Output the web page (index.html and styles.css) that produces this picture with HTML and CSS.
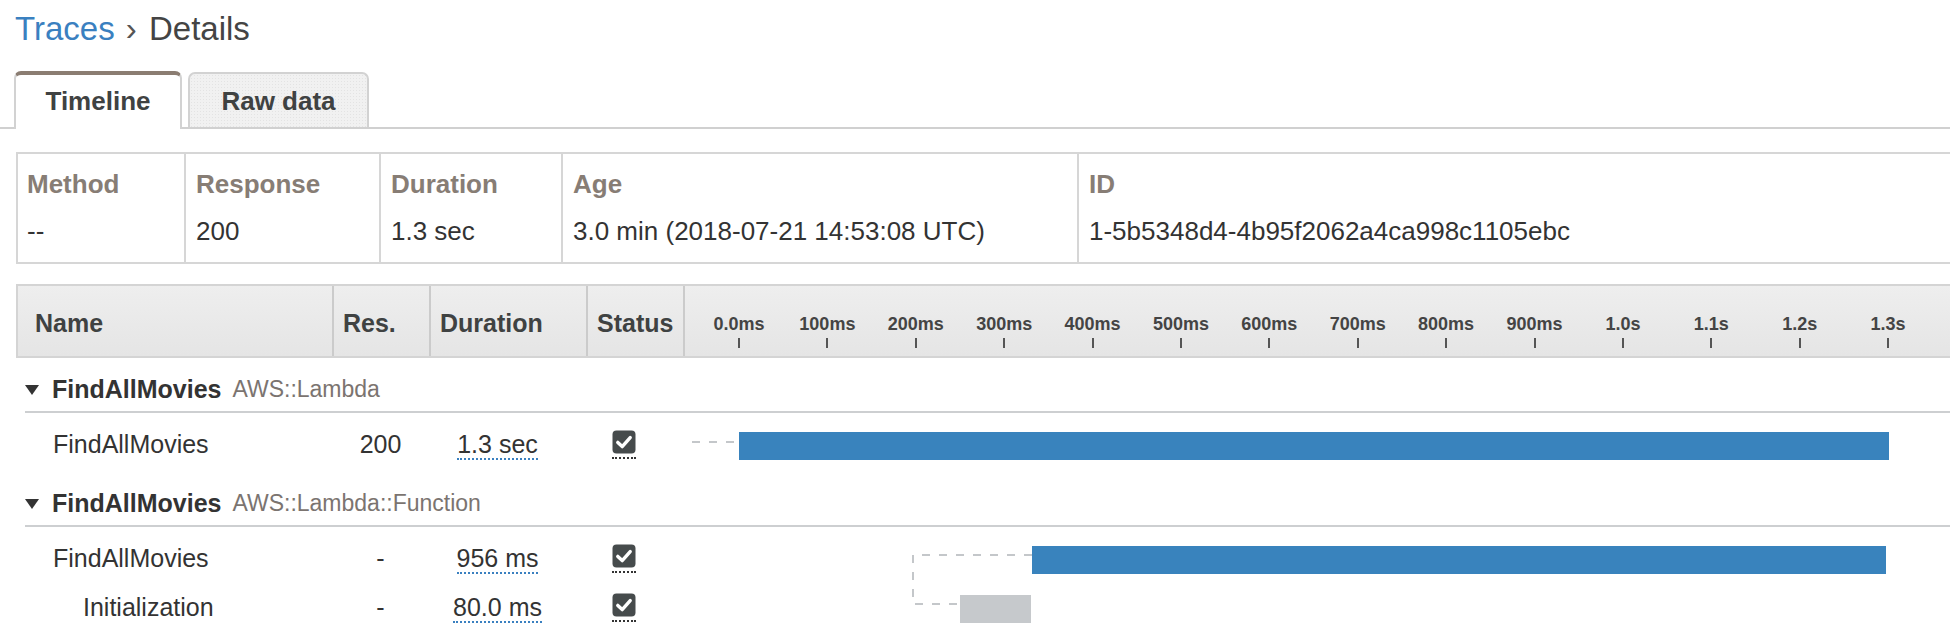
FILE: index.html
```html
<!DOCTYPE html>
<html>
<head>
<meta charset="utf-8">
<link rel="stylesheet" href="styles.css">
</head>
<body>
<div class="page">
  <h1 class="crumbs"><span class="crumb-link">Traces</span> <span class="sep">›</span> Details</h1>

  <div class="tabs">
    <div class="tab tab-active">Timeline</div>
    <div class="tab tab-raw">Raw data</div>
  </div>

  <div class="summary">
    <div class="sum-cell"><div class="sum-label">Method</div><div class="sum-value">--</div></div>
    <div class="sum-cell"><div class="sum-label">Response</div><div class="sum-value">200</div></div>
    <div class="sum-cell"><div class="sum-label">Duration</div><div class="sum-value">1.3 sec</div></div>
    <div class="sum-cell"><div class="sum-label">Age</div><div class="sum-value">3.0 min (2018-07-21 14:53:08 UTC)</div></div>
    <div class="sum-cell"><div class="sum-label">ID</div><div class="sum-value">1-5b5348d4-4b95f2062a4ca998c1105ebc</div></div>
  </div>

  <div class="timeline">
    <div class="tl-head">
      <div class="th th-name">Name</div>
      <div class="th">Res.</div>
      <div class="th">Duration</div>
      <div class="th">Status</div>
      <div class="th-axis">
        <div class="tick"><span>0.0ms</span><i></i></div>
        <div class="tick"><span>100ms</span><i></i></div>
        <div class="tick"><span>200ms</span><i></i></div>
        <div class="tick"><span>300ms</span><i></i></div>
        <div class="tick"><span>400ms</span><i></i></div>
        <div class="tick"><span>500ms</span><i></i></div>
        <div class="tick"><span>600ms</span><i></i></div>
        <div class="tick"><span>700ms</span><i></i></div>
        <div class="tick"><span>800ms</span><i></i></div>
        <div class="tick"><span>900ms</span><i></i></div>
        <div class="tick"><span>1.0s</span><i></i></div>
        <div class="tick"><span>1.1s</span><i></i></div>
        <div class="tick"><span>1.2s</span><i></i></div>
        <div class="tick"><span>1.3s</span><i></i></div>
      </div>
    </div>

    <div class="group">
      <div class="group-head"><span class="caret"></span><span class="g-name">FindAllMovies</span><span class="g-type">AWS::Lambda</span></div>
      <div class="group-body">
        <div class="row">
          <div class="c-name">FindAllMovies</div>
          <div class="c-res">200</div>
          <div class="c-dur"><span class="dur">1.3 sec</span></div>
          <div class="c-status"><span class="check"><svg width="24" height="24" viewBox="0 0 24 24"><rect x="0.5" y="0.5" width="23" height="23" rx="4" fill="#464b4c"/><path d="M5.8 12.4 L10.2 16.6 L18.2 7.6" fill="none" stroke="#fff" stroke-width="3.4" stroke-linecap="round" stroke-linejoin="round"/></svg></span></div>
          <div class="c-track">
            <div class="scale">
              <svg class="conn conn-1" width="47" height="2" viewBox="0 0 47 2"><path d="M0 1 H47" stroke="#c4c7ca" stroke-width="2" stroke-dasharray="8 9"/></svg>
              <div class="bar bar-blue" style="margin-left:0px;width:1150px"></div>
            </div>
          </div>
        </div>
      </div>
    </div>

    <div class="group">
      <div class="group-head"><span class="caret"></span><span class="g-name">FindAllMovies</span><span class="g-type">AWS::Lambda::Function</span></div>
      <div class="group-body">
        <div class="row">
          <div class="c-name">FindAllMovies</div>
          <div class="c-res">-</div>
          <div class="c-dur"><span class="dur">956 ms</span></div>
          <div class="c-status"><span class="check"><svg width="24" height="24" viewBox="0 0 24 24"><rect x="0.5" y="0.5" width="23" height="23" rx="4" fill="#464b4c"/><path d="M5.8 12.4 L10.2 16.6 L18.2 7.6" fill="none" stroke="#fff" stroke-width="3.4" stroke-linecap="round" stroke-linejoin="round"/></svg></span></div>
          <div class="c-track">
            <div class="scale">
              <svg class="conn conn-2" width="120" height="52" viewBox="0 0 120 52"><path d="M120 1 H1 V50 H48" fill="none" stroke="#c4c7ca" stroke-width="2" stroke-dasharray="8 9"/></svg>
              <div class="bar bar-blue" style="margin-left:293px;width:854px"></div>
            </div>
          </div>
        </div>
        <div class="row">
          <div class="c-name c-indent">Initialization</div>
          <div class="c-res">-</div>
          <div class="c-dur"><span class="dur">80.0 ms</span></div>
          <div class="c-status"><span class="check"><svg width="24" height="24" viewBox="0 0 24 24"><rect x="0.5" y="0.5" width="23" height="23" rx="4" fill="#464b4c"/><path d="M5.8 12.4 L10.2 16.6 L18.2 7.6" fill="none" stroke="#fff" stroke-width="3.4" stroke-linecap="round" stroke-linejoin="round"/></svg></span></div>
          <div class="c-track">
            <div class="scale">
              <div class="bar bar-gray" style="margin-left:221px;width:71px"></div>
            </div>
          </div>
        </div>
      </div>
    </div>
  </div>
</div>
</body>
</html>
```

FILE: styles.css
```css
* { box-sizing: border-box; }

html, body {
  margin: 0;
  padding: 0;
  background: #fff;
  overflow: hidden;
}

body {
  font-family: "Liberation Sans", Arial, Helvetica, sans-serif;
  color: #333;
}

.page {
  padding-left: 14px;
  width: 1950px;
}

.crumbs {
  margin: 0;
  padding-top: 9px;
  padding-left: 1px;
  font-size: 33px;
  font-weight: normal;
  line-height: 40px;
  color: #444;
}

.crumb-link { color: #3a80c0; }

.sep {
  color: #555;
  margin: 0 3px 0 2px;
}

.tabs {
  display: flex;
  align-items: flex-end;
  gap: 6px;
  margin-top: 22px;
  margin-left: -14px;
  margin-right: -20px;
  padding-left: 14px;
  border-bottom: 2px solid #d0d0d0;
}

.tab {
  font-size: 26px;
  font-weight: bold;
  line-height: 30px;
  color: #3f4242;
  text-align: center;
  border: 2px solid #d2d2d2;
  border-bottom: none;
  border-radius: 7px 7px 0 0;
}

.tab-active {
  width: 168px;
  height: 58px;
  margin-bottom: -2px;
  padding-top: 11px;
  background: #fff;
  border-top: 4px solid #8b7d72;
}

.tab-raw {
  width: 181px;
  height: 55px;
  padding-top: 12px;
  background-color: #f1f1f1;
  background-image: radial-gradient(#e3e3e3 0.7px, transparent 0.9px);
  background-size: 3px 3px;
}

.summary {
  display: grid;
  grid-template-columns: 166px 195px 182px 516px 1fr;
  margin-top: 23px;
  margin-left: 2px;
  margin-right: -20px;
  border: 2px solid #d6d6d6;
}

.sum-cell {
  padding: 15px 10px 16px 10px;
  border-left: 2px solid #d6d6d6;
}

.sum-cell:first-child {
  border-left: none;
  padding-left: 9px;
}

.sum-label {
  font-size: 26px;
  font-weight: bold;
  line-height: 30px;
  color: #877d75;
}

.sum-value {
  margin-top: 17px;
  font-size: 26px;
  line-height: 30px;
  color: #333;
}

.timeline {
  margin-top: 20px;
  margin-left: 2px;
  margin-right: -20px;
}

.tl-head {
  display: grid;
  grid-template-columns: 314px 97px 157px 97px 1fr;
  height: 74px;
  border: 2px solid #d4d4d4;
  border-right: none;
  background: linear-gradient(#eeeeee, #e5e5e5);
}

.th {
  display: flex;
  align-items: center;
  padding-top: 4px;
  padding-left: 9px;
  font-size: 25px;
  font-weight: bold;
  color: #3f4242;
  border-left: 2px solid #cbcbcb;
}

.th-name {
  border-left: none;
  padding-left: 17px;
}

.th-axis {
  display: flex;
  border-left: 2px solid #cbcbcb;
  padding-left: 9.8px;
  padding-top: 28px;
}

.tick {
  width: 88.4px;
  flex: none;
  display: flex;
  flex-direction: column;
  align-items: center;
}

.tick span {
  font-size: 18px;
  font-weight: bold;
  line-height: 20px;
  color: #444;
}

.tick i {
  display: block;
  width: 2px;
  height: 10px;
  margin-top: 4px;
  background: #555;
}

.group-head {
  display: flex;
  align-items: center;
  height: 55px;
  margin-left: 9px;
  padding-top: 9px;
  border-bottom: 2px solid #cdcfd1;
}

.caret {
  width: 0;
  height: 0;
  margin-top: 1px;
  margin-right: 13px;
  border-left: 7px solid transparent;
  border-right: 7px solid transparent;
  border-top: 10px solid #333;
}

.g-name {
  font-size: 25px;
  font-weight: bold;
  line-height: 30px;
  color: #333;
}

.g-type {
  margin-left: 11px;
  font-size: 23px;
  line-height: 30px;
  color: #7b7470;
}

.group-body {
  padding-top: 7px;
  padding-bottom: 3px;
}

.row {
  display: grid;
  grid-template-columns: 316px 97px 157px 97px 1fr;
  height: 49px;
  align-items: center;
  font-size: 25px;
  color: #333;
}

.c-name { padding-left: 37px; }
.c-indent { padding-left: 67px; }

.c-res { text-align: center; }

.c-dur {
  text-align: center;
  padding-right: 20px;
}

.dur {
  border-bottom: 2px dotted #3a80c0;
}

.c-status { padding-left: 26px; }

.check {
  display: inline-block;
  padding-bottom: 3px;
  border-bottom: 2px dotted #333;
  line-height: 0;
}

.c-track {
  align-self: stretch;
  padding-left: 56px;
}

.scale {
  position: relative;
  width: 1150px;
  height: 100%;
  padding-top: 12px;
}

.bar {
  height: 28px;
}

.bar-blue { background: #3983bd; }
.bar-gray { background: #c6c9cc; }

.conn {
  position: absolute;
  display: block;
}

.conn-1 {
  left: -47px;
  top: 21px;
}

.conn-2 {
  left: 173px;
  top: 20px;
}
```
